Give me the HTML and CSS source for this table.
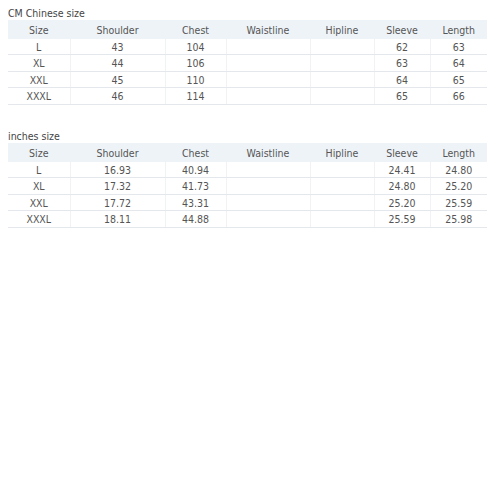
FILE: index.html
```html
<!DOCTYPE html>
<html>
<head>
<meta charset="utf-8">
<link rel="stylesheet" href="styles.css">
</head>
<body>
<div class="block">
  <div class="caption">CM Chinese size</div>
  <table class="size-table">
    <colgroup><col class="c1"><col class="c2"><col class="c3"><col class="c4"><col class="c5"><col class="c6"><col class="c7"></colgroup>
    <thead><tr><th>Size</th><th>Shoulder</th><th>Chest</th><th>Waistline</th><th>Hipline</th><th>Sleeve</th><th>Length</th></tr></thead>
    <tbody>
      <tr><td>L</td><td>43</td><td>104</td><td></td><td></td><td>62</td><td>63</td></tr>
      <tr><td>XL</td><td>44</td><td>106</td><td></td><td></td><td>63</td><td>64</td></tr>
      <tr><td>XXL</td><td>45</td><td>110</td><td></td><td></td><td>64</td><td>65</td></tr>
      <tr><td>XXXL</td><td>46</td><td>114</td><td></td><td></td><td>65</td><td>66</td></tr>
    </tbody>
  </table>
</div>
<div class="block second">
  <div class="caption">inches size</div>
  <table class="size-table">
    <colgroup><col class="c1"><col class="c2"><col class="c3"><col class="c4"><col class="c5"><col class="c6"><col class="c7"></colgroup>
    <thead><tr><th>Size</th><th>Shoulder</th><th>Chest</th><th>Waistline</th><th>Hipline</th><th>Sleeve</th><th>Length</th></tr></thead>
    <tbody>
      <tr><td>L</td><td>16.93</td><td>40.94</td><td></td><td></td><td>24.41</td><td>24.80</td></tr>
      <tr><td>XL</td><td>17.32</td><td>41.73</td><td></td><td></td><td>24.80</td><td>25.20</td></tr>
      <tr><td>XXL</td><td>17.72</td><td>43.31</td><td></td><td></td><td>25.20</td><td>25.59</td></tr>
      <tr><td>XXXL</td><td>18.11</td><td>44.88</td><td></td><td></td><td>25.59</td><td>25.98</td></tr>
    </tbody>
  </table>
</div>
</body>
</html>
```
FILE: styles.css
```css
html, body { margin: 0; padding: 0; background: #fff; }
body {
  padding: 7px 13px 0 8px;
  font-family: "DejaVu Sans Condensed", "DejaVu Sans", sans-serif;
  font-size: 10.5px;
  color: #555;
}
.caption {
  height: 13px;
  line-height: 13px;
  color: #444;
}
.second { margin-top: 25px; }
.size-table {
  width: 479px;
  border-collapse: collapse;
  table-layout: fixed;
}
.c1 { width: 62px; } .c2 { width: 95px; } .c3 { width: 61px; } .c4 { width: 84px; }
.c5 { width: 64px; } .c6 { width: 56px; } .c7 { width: 57px; }
.size-table th {
  background: #eef3f8;
  font-weight: normal;
  height: 19px;
  padding: 0;
  text-align: center;
  border-left: 1px solid #eef3f8;
}
.size-table td {
  height: 16px;
  padding: 0;
  text-align: center;
  border-bottom: 1px solid #e4e8ec;
  border-left: 1px solid #f0f2f4;
}
.size-table th:first-child, .size-table td:first-child { border-left: none; }
.size-table tr:nth-child(odd) td { height: 15px; }
```
